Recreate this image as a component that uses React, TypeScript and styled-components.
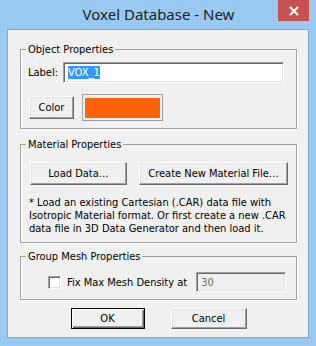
import styled, { createGlobalStyle } from "styled-components";

const GlobalStyle = createGlobalStyle`
  html, body {
    margin: 0;
    padding: 0;
    background: #99c9f0;
  }

  body {
    font-family: "DejaVu Sans Condensed", "DejaVu Sans", sans-serif;
    font-size: 11px;
    color: #000000;
  }
`;

export default function App() {
  return (
    <Window>
      <GlobalStyle />
      <TitleBar>
        <span />
        <Title>Voxel Database - New</Title>
        <CloseCell>
          <CloseButton>
            <svg width="10" height="10" viewBox="0 0 10 10">
              <path d="M1 1 L9 9 M9 1 L1 9" stroke="#ffffff" strokeWidth="2" />
            </svg>
          </CloseButton>
        </CloseCell>
      </TitleBar>

      <Client>
        <Group>
          <Legend>Object Properties</Legend>
          <Row>
            <Text>Label:</Text>
            <TextBox $width={221} $height={21}>
              <Selected>VOX_1</Selected>
            </TextBox>
          </Row>
          <Row $top={11} $gap={8} $left={1}>
            <Button $width={45} $height={23}>Color</Button>
            <Swatch>
              <SwatchFill />
            </Swatch>
          </Row>
        </Group>

        <Group $top={9}>
          <Legend>Material Properties</Legend>
          <Row $top={5} $gap={12} $left={2}>
            <Button $width={97} $height={23}>Load Data…</Button>
            <Button $width={149} $height={23}>Create New Material File…</Button>
          </Row>
          <Note>
            * Load an existing Cartesian (.CAR) data file with Isotropic
            Material format. Or first create a new .CAR data file in 3D Data
            Generator and then load it.
          </Note>
        </Group>

        <Group $top={7}>
          <Legend>Group Mesh Properties</Legend>
          <Row $top={3} $left={20} $gap={6}>
            <CheckBox />
            <Text>Fix Max Mesh Density at</Text>
            <TextBox $width={90} $height={20} $offset={3} $disabled>
              30
            </TextBox>
          </Row>
        </Group>

        <Footer>
          <Button $width={74} $height={21} $default>
            OK
          </Button>
          <Button $width={76} $height={21}>Cancel</Button>
        </Footer>
      </Client>
    </Window>
  );
}

const Window = styled.div`
  width: 316px;
  height: 346px;
  box-sizing: border-box;
  padding: 0 7px 8px 7px;
  display: flex;
  flex-direction: column;
  background: #99c9f0;
`;

const TitleBar = styled.div`
  height: 29px;
  display: grid;
  grid-template-columns: 1fr auto 1fr;
  align-items: start;
`;

const Title = styled.div`
  font-family: "Noto Sans", sans-serif;
  font-size: 15px;
  line-height: 29px;
  color: #222222;
  padding-left: 1px;
`;

const CloseCell = styled.div`
  display: flex;
  justify-content: flex-end;
`;

const CloseButton = styled.div`
  width: 31px;
  height: 21px;
  background: #c75050;
  display: flex;
  align-items: center;
  justify-content: center;
`;

const Client = styled.div`
  flex: 1;
  border: 1px solid #7fa9d2;
  background: #f0f0f0;
  padding: 13px 11px 0 12px;
  display: flex;
  flex-direction: column;
`;

const Group = styled.fieldset<{ $top?: number }>`
  margin: ${(p) => p.$top ?? 0}px 0 0 0;
  padding: 6px 8px 7px 7px;
  border: 1px solid #a0a0a0;
  box-shadow: 1px 1px 0 #ffffff, inset 1px 0 0 #ffffff;
  min-inline-size: 0;
`;

const Legend = styled.legend`
  padding: 0 2px;
  margin-left: -2px;
  line-height: 13px;
`;

const Row = styled.div<{ $top?: number; $gap?: number; $left?: number }>`
  display: flex;
  align-items: center;
  gap: ${(p) => p.$gap ?? 5}px;
  margin-top: ${(p) => p.$top ?? 0}px;
  padding-left: ${(p) => p.$left ?? 0}px;
`;

const Text = styled.span`
  line-height: 13px;
  white-space: nowrap;
`;

const TextBox = styled.div<{
  $width: number;
  $height: number;
  $offset?: number;
  $disabled?: boolean;
}>`
  width: ${(p) => p.$width}px;
  height: ${(p) => p.$height}px;
  margin-left: ${(p) => p.$offset ?? 0}px;
  box-sizing: border-box;
  border-style: solid;
  border-width: 1px;
  border-color: #a0a0a0 #ffffff #ffffff #a0a0a0;
  box-shadow: inset 1px 1px 0 #696969, inset -1px -1px 0 #e3e3e3;
  background: ${(p) => (p.$disabled ? "#f0f0f0" : "#ffffff")};
  color: ${(p) => (p.$disabled ? "#6d6d6d" : "#000000")};
  display: flex;
  align-items: center;
  padding-left: 4px;
`;

const Selected = styled.span`
  background: #3399ff;
  color: #ffffff;
  line-height: 13px;
`;

const Button = styled.div<{ $width: number; $height: number; $default?: boolean }>`
  width: ${(p) => p.$width}px;
  height: ${(p) => p.$height}px;
  box-sizing: border-box;
  display: flex;
  align-items: center;
  justify-content: center;
  background: #f0f0f0;
  border-style: solid;
  border-width: 1px;
  border-color: ${(p) =>
    p.$default ? "#000000" : "#ffffff #696969 #696969 #ffffff"};
  box-shadow: ${(p) =>
    p.$default
      ? "inset 1px 1px 0 #ffffff, inset -1px -1px 0 #696969, inset -2px -2px 0 #a0a0a0"
      : "inset -1px -1px 0 #a0a0a0, inset 1px 1px 0 #e3e3e3"};
  white-space: nowrap;
`;

const Swatch = styled.div`
  width: 81px;
  height: 27px;
  box-sizing: border-box;
  border: 1px solid #a0a0a0;
  padding: 3px 2px 2px 2px;
  display: flex;
`;

const SwatchFill = styled.div`
  flex: 1;
  background: #ff6308;
`;

const Note = styled.p`
  margin: 11px 0 0 1px;
  line-height: 13px;
`;

const CheckBox = styled.div`
  width: 13px;
  height: 13px;
  box-sizing: border-box;
  background: #ffffff;
  border-style: solid;
  border-width: 1px;
  border-color: #a0a0a0 #ffffff #ffffff #a0a0a0;
  box-shadow: inset 1px 1px 0 #696969, inset -1px -1px 0 #e3e3e3;
`;

const Footer = styled.div`
  display: flex;
  justify-content: center;
  gap: 26px;
  margin-top: 8px;
`;
